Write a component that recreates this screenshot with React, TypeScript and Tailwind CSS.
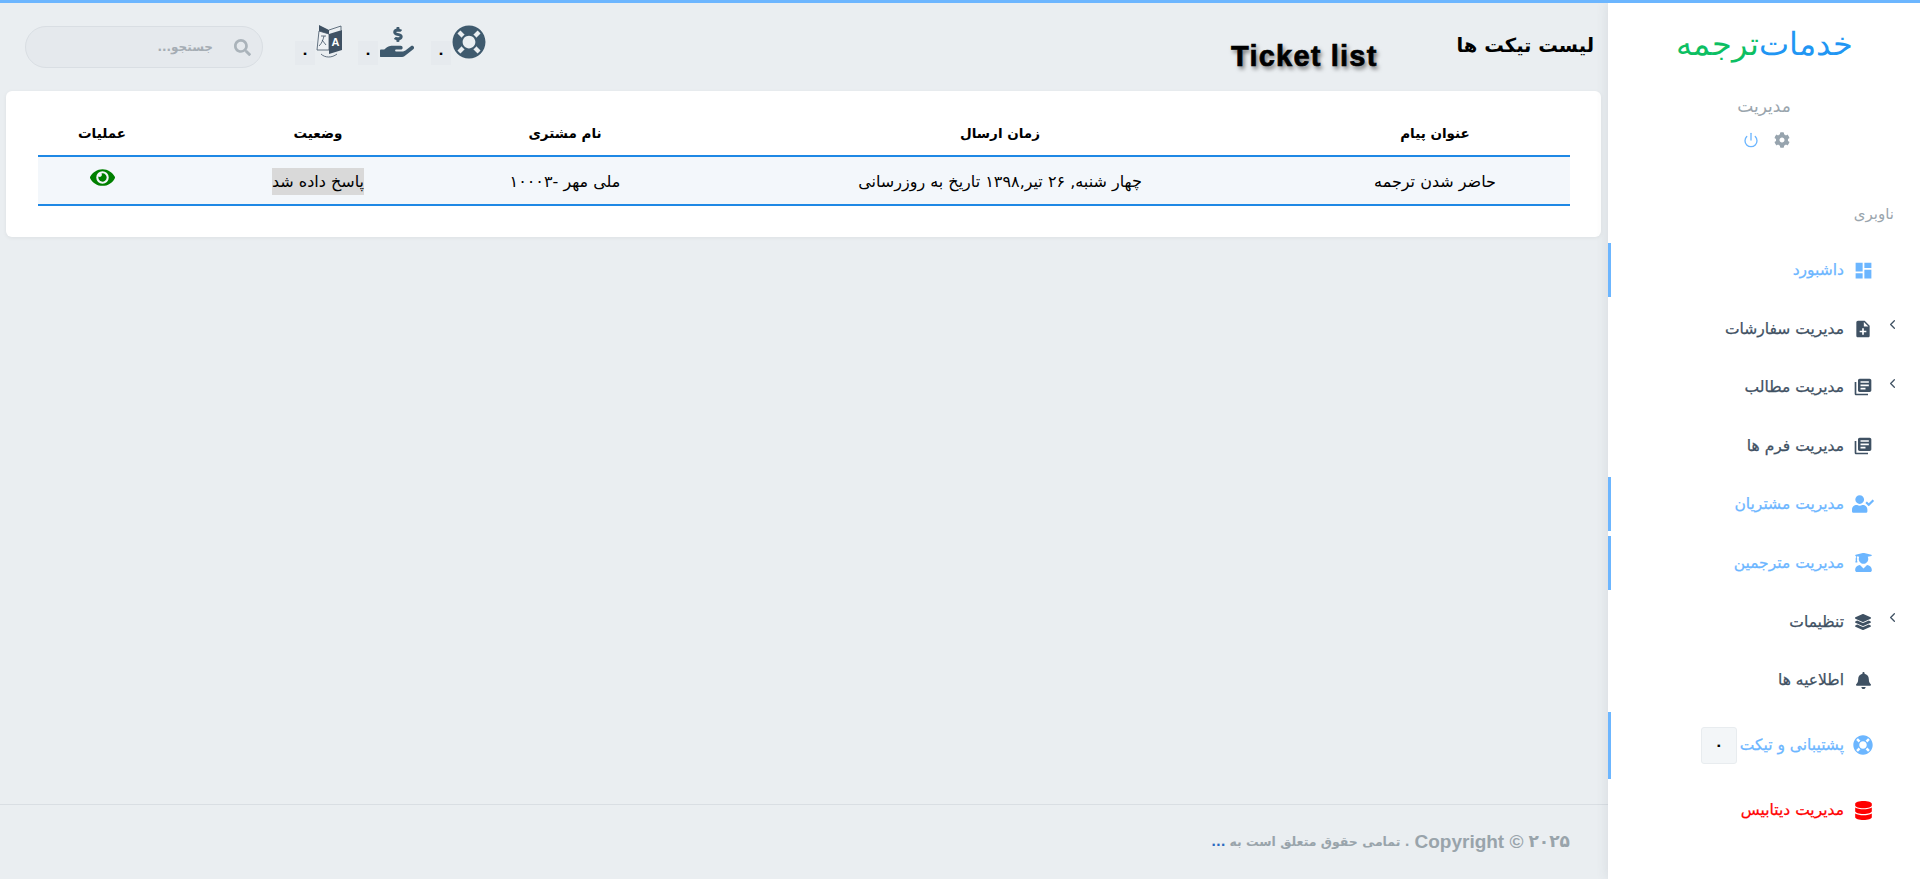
import type { IconType } from 'react-icons';
import {
  FaBell,
  FaCog,
  FaDatabase,
  FaEye,
  FaHandHoldingUsd,
  FaLayerGroup,
  FaLifeRing,
  FaSearch,
  FaUserCheck,
  FaUserGraduate,
} from 'react-icons/fa';
import { FiChevronLeft, FiPower } from 'react-icons/fi';
import { MdDashboard, MdLibraryBooks, MdNoteAdd } from 'react-icons/md';

type NavItem = {
  label: string;
  icon: IconType;
  tone: 'dark' | 'blue' | 'red';
  iconClass: string;
  chevron?: boolean;
  marked?: boolean;
  badge?: string;
};

const navItems: NavItem[] = [
  { label: 'داشبورد', icon: MdDashboard, tone: 'blue', iconClass: 'text-[21px]', marked: true },
  { label: 'مدیریت سفارشات', icon: MdNoteAdd, tone: 'dark', iconClass: 'text-[20px]', chevron: true },
  { label: 'مدیریت مطالب', icon: MdLibraryBooks, tone: 'dark', iconClass: 'text-[20px]', chevron: true },
  { label: 'مدیریت فرم ها', icon: MdLibraryBooks, tone: 'dark', iconClass: 'text-[20px]' },
  { label: 'مدیریت مشتریان', icon: FaUserCheck, tone: 'blue', iconClass: 'text-[22px]', marked: true },
  { label: 'مدیریت مترجمین', icon: FaUserGraduate, tone: 'blue', iconClass: 'text-[19px]', marked: true },
  { label: 'تنظیمات', icon: FaLayerGroup, tone: 'dark', iconClass: 'text-[16px]', chevron: true },
  { label: 'اطلاعیه ها', icon: FaBell, tone: 'dark', iconClass: 'text-[17px]' },
  { label: 'پشتیبانی و تیکت', icon: FaLifeRing, tone: 'blue', iconClass: 'text-[20px]', marked: true, badge: '۰' },
  { label: 'مدیریت دیتابیس', icon: FaDatabase, tone: 'red', iconClass: 'text-[19px]' },
];

const toneClass = {
  dark: 'text-[#3f5163]',
  blue: 'text-[#6cb6ff]',
  red: 'text-[#ff0000]',
};

function TranslateIcon() {
  return (
    <svg viewBox="0 0 28 34" className="h-[34px] w-[28px]" fill="none">
      <path d="M4 6 L14 9 L14 25 L2 25 Z" stroke="#3f5163" strokeWidth="0.8" fill="#eef1f4" />
      <path d="M4 0 L14 5 L14 9 L4 6 Z" fill="#3f5163" />
      <path d="M14 5 L26 1 L26 5" stroke="#3f5163" strokeWidth="0.8" />
      <path d="M14 9 L27 5 L27 25 L14 29 Z" fill="#3f5163" />
      <path d="M6 11 L11 11 M9 11 C8 15 7 18 4 21 M7 15 L11 20" stroke="#3f5163" strokeWidth="0.8" />
      <text x="20.5" y="21" textAnchor="middle" fill="#fff" fontSize="11" fontWeight="700" fontFamily="Liberation Sans, sans-serif">
        A
      </text>
      <path d="M6 29 C10 33 17 33 22 29" stroke="#3f5163" strokeWidth="0.8" />
    </svg>
  );
}

function HeaderIcon({ children, className }: { children: React.ReactNode; className: string }) {
  return (
    <div className={`flex items-start ${className}`}>
      {children}
      <span className="mt-[16px] flex h-[24px] w-[20px] items-center justify-center bg-[#e6eaee] text-[14px] font-bold leading-none text-black">
        ۰
      </span>
    </div>
  );
}

function Sidebar() {
  return (
    <aside className="relative z-10 flex w-[312px] shrink-0 flex-col bg-white shadow-[0_0_12px_rgba(60,75,90,0.12)]">
      <div className="flex justify-center pt-[17px] text-[32px] font-[200] leading-[48px]">
        <span className="text-[#2196f3]">خدمات</span>
        <span className="text-[#0dbf63]">ترجمه</span>
      </div>
      <p className="mt-[28px] text-center text-[17px] leading-5 text-[#9aa5ad]">مدیریت</p>
      <div className="mt-[16px] flex h-[16px] items-center justify-center gap-[15px] pl-[5px]">
        <FaCog className="text-[16px] text-[#97a4ae]" />
        <FiPower className="text-[16px] text-[#6cb6ff]" />
      </div>
      <p className="mt-[56px] pr-[26px] text-[15px] leading-5 text-[#9aa5ad]">ناوبری</p>
      <nav className="mt-[19px] flex flex-col gap-[4.6px]">
        {navItems.map(({ label, icon: Icon, tone, iconClass, chevron, marked, badge }) => (
          <div
            key={label}
            className={`flex items-center pr-[43px] ${badge ? 'h-[67px]' : 'h-[54px]'} ${
              marked ? 'border-l-[3px] border-[#6cb6ff]' : 'border-l-[3px] border-transparent'
            } ${toneClass[tone]}`}
          >
            <span className="flex w-[28px] shrink-0 justify-center">
              <Icon className={iconClass} />
            </span>
            <span className="mr-[5px] text-[15.5px] font-normal leading-5 [-webkit-text-stroke:0.25px_currentColor]">
              {label}
            </span>
            {badge && (
              <span className="mr-[3px] flex h-[37px] w-[36px] items-center justify-center rounded-[3px] border border-[#e8ecef] bg-[#f3f6f8] text-[14px] font-bold text-black">
                {badge}
              </span>
            )}
            {chevron && <FiChevronLeft className="absolute right-[20px] -mt-[8px] text-[15px] text-[#3f5163]" />}
          </div>
        ))}
      </nav>
    </aside>
  );
}

function TicketTable() {
  const heads = ['عنوان پیام', 'زمان ارسال', 'نام مشتری', 'وضعیت', 'عملیات'];
  return (
    <table className="w-full table-fixed border-collapse text-center">
      <colgroup>
        <col className="w-[230px]" />
        <col className="w-[680px]" />
        <col className="w-[190px]" />
        <col className="w-[304px]" />
        <col className="w-[128px]" />
      </colgroup>
      <thead>
        <tr className="h-[65px] border-b-2 border-[#1e88e5] text-[13.5px] text-black">
          {heads.map((head, idx) => (
            <th key={head} className={`pt-[20px] font-bold ${idx === 0 ? 'pr-[40px]' : ''}`}>
              {head}
            </th>
          ))}
        </tr>
      </thead>
      <tbody>
        <tr className="h-[49px] border-b-2 border-[#1e88e5] bg-[#f3f7fb] text-[16px] text-black">
          <td className="pr-[40px] pt-[2px]">حاضر شدن ترجمه</td>
          <td className="pt-[2px]">چهار شنبه, ۲۶ تیر,۱۳۹۸ تاریخ به روزرسانی</td>
          <td className="pt-[2px]">ملی مهر -۱۰۰۰۳</td>
          <td className="pt-[2px]">
            <span className="inline-block h-[27px] bg-[#d9d9d9] leading-[27px]">پاسخ داده شد</span>
          </td>
          <td>
            <FaEye className="mx-auto -mt-[6px] text-[25px] text-[#008000]" />
          </td>
        </tr>
      </tbody>
    </table>
  );
}

export default function App() {
  return (
    <div
      dir="rtl"
      className="flex h-screen overflow-hidden border-t-[3px] border-[#6cb6ff] bg-[#eaeef1] font-['DejaVu_Sans',sans-serif]"
    >
      <Sidebar />
      <main className="flex min-w-0 flex-1 flex-col">
        <header className="flex h-[88px] items-start pl-[25px] pr-[14px]">
          <h1 className="mt-[31px] text-[19.5px] font-bold leading-6 text-black">لیست تیکت ها</h1>
          <span
            dir="ltr"
            className="mr-[79px] mt-[37px] font-['Liberation_Sans',sans-serif] text-[29px] font-bold leading-8 tracking-[1.2px] text-black [-webkit-text-stroke:0.7px_#000] [text-shadow:2px_3px_4px_rgba(0,0,0,0.55)]"
          >
            Ticket list
          </span>
          <div className="mr-auto mt-[22px] flex items-start">
            <HeaderIcon className="gap-[1px]">
              <FaLifeRing className="text-[34px] text-[#3f5a6e]" />
            </HeaderIcon>
            <HeaderIcon className="mr-[17px] gap-[2px]">
              <FaHandHoldingUsd className="text-[34px] text-[#3f5a6e]" />
            </HeaderIcon>
            <HeaderIcon className="mr-[15px]">
              <TranslateIcon />
            </HeaderIcon>
          </div>
          <div className="mr-[32px] mt-[23px] flex h-[42px] w-[238px] items-center rounded-full border border-[#d9dee3] bg-[#e5e9ed] pr-[11px]">
            <FaSearch className="text-[17px] text-[#aab3ba]" />
            <span className="mr-[21px] text-[12px] font-bold text-[#a5adb4]">جستجو...</span>
          </div>
        </header>
        <section className="ml-[6px] mr-[7px] h-[146px] shrink-0 rounded-[6px] bg-white pb-[31px] pl-[32px] pr-[31px] shadow-[0_1px_4px_rgba(0,0,0,0.06)]">
          <TicketTable />
        </section>
        <div className="flex-1" />
        <footer className="flex h-[75px] shrink-0 items-center border-t border-[#d9dee3] pr-[38px] text-[12.5px] font-semibold text-[#99a4ab]">
          <span className="text-[17px]">۲۰۲۵</span>
          <span dir="ltr" className="mx-[5px] font-['Liberation_Sans',sans-serif] text-[19px] font-bold">
            Copyright ©
          </span>
          <span>. تمامی حقوق متعلق است به </span>
          <span className="mr-[4px] text-[#2a6bc0]">...</span>
        </footer>
      </main>
    </div>
  );
}
